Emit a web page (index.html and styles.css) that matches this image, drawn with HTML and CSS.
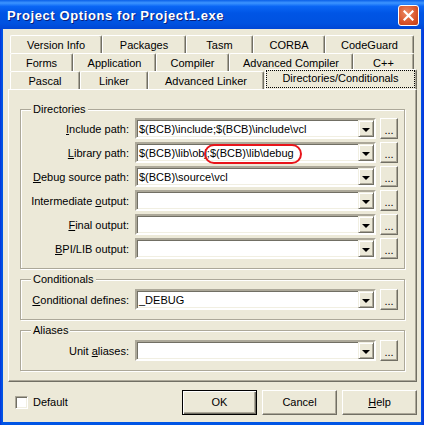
FILE: index.html
```html
<!DOCTYPE html>
<html lang="en">
<head>
    <meta charset="UTF-8">
    <title>Project Options for Project1.exe</title>
    <link rel="stylesheet" href="styles.css">
</head>
<body>
  <div class="window">
    <div class="titlebar">
      <span class="title">Project Options for Project1.exe</span>
      <button class="close" aria-label="Close">
        <svg width="11" height="11" viewBox="0 0 11 11"><path d="M1.5 1.5 L9.5 9.5 M9.5 1.5 L1.5 9.5" stroke="#fff" stroke-width="2.2" stroke-linecap="square"/></svg>
      </button>
    </div>
    <div class="client">
      <div class="tabs">
        <div class="tab-row">
          <div class="tab" style="width:92px">Version Info</div>
          <div class="tab" style="width:84px">Packages</div>
          <div class="tab" style="width:67px">Tasm</div>
          <div class="tab" style="width:72px">CORBA</div>
          <div class="tab" style="width:89px">CodeGuard</div>
        </div>
        <div class="tab-row">
          <div class="tab" style="width:63px">Forms</div>
          <div class="tab" style="width:83px">Application</div>
          <div class="tab" style="width:73px">Compiler</div>
          <div class="tab" style="width:124px">Advanced Compiler</div>
          <div class="tab" style="width:61px">C++</div>
        </div>
        <div class="tab-row">
          <div class="tab" style="width:70px">Pascal</div>
          <div class="tab" style="width:68px">Linker</div>
          <div class="tab" style="width:116px">Advanced Linker</div>
          <div class="tab active"><span class="focus">Directories/Conditionals</span></div>
        </div>
      </div>

      <div class="page">
        <div class="group dirs">
          <span class="group-title">Directories</span>
          <div class="field">
            <label><u>I</u>nclude path:</label>
            <div class="combo"><span class="combo-text">$(BCB)\include;$(BCB)\include\vcl</span><span class="drop"></span></div>
            <button class="dots">...</button>
          </div>
          <div class="field">
            <label><u>L</u>ibrary path:</label>
            <div class="combo"><span class="combo-text">$(BCB)\lib\obj;$(BCB)\lib\debug</span><span class="drop"></span><span class="mark"></span></div>
            <button class="dots">...</button>
          </div>
          <div class="field">
            <label><u>D</u>ebug source path:</label>
            <div class="combo"><span class="combo-text">$(BCB)\source\vcl</span><span class="drop"></span></div>
            <button class="dots">...</button>
          </div>
          <div class="field">
            <label>Intermediate <u>o</u>utput:</label>
            <div class="combo"><span class="combo-text"></span><span class="drop"></span></div>
            <button class="dots">...</button>
          </div>
          <div class="field">
            <label><u>F</u>inal output:</label>
            <div class="combo"><span class="combo-text"></span><span class="drop"></span></div>
            <button class="dots">...</button>
          </div>
          <div class="field">
            <label><u>B</u>PI/LIB output:</label>
            <div class="combo"><span class="combo-text"></span><span class="drop"></span></div>
            <button class="dots">...</button>
          </div>
        </div>

        <div class="group">
          <span class="group-title">Conditionals</span>
          <div class="field">
            <label><u>C</u>onditional defines:</label>
            <div class="combo"><span class="combo-text">_DEBUG</span><span class="drop"></span></div>
            <button class="dots">...</button>
          </div>
        </div>

        <div class="group">
          <span class="group-title">Aliases</span>
          <div class="field">
            <label>Unit <u>a</u>liases:</label>
            <div class="combo"><span class="combo-text"></span><span class="drop"></span></div>
            <button class="dots">...</button>
          </div>
        </div>
      </div>

      <div class="footer">
        <span class="check"></span>
        <span class="check-label">Default</span>
        <button class="btn default">OK</button>
        <button class="btn">Cancel</button>
        <button class="btn"><u>H</u>elp</button>
      </div>
    </div>
  </div>
</body>
</html>
```

FILE: styles.css
```css
* {
  margin: 0;
  padding: 0;
  box-sizing: border-box;
}

body {
  font-family: "Liberation Sans", Arial, sans-serif;
  font-size: 11px;
  color: #000;
  background-color: #0054e3;
}

.window {
  width: 424px;
  height: 425px;
  display: flex;
  flex-direction: column;
  background: linear-gradient(to right, #0831d9, #0055e5 2px, #0055e5 421px, #0831d9);
}

/* title bar */
.titlebar {
  height: 29px;
  display: flex;
  align-items: center;
  justify-content: space-between;
  padding: 2px 5px 0 7px;
  background: linear-gradient(#0a5fe8 0%, #3d95ff 10%, #0a66f5 22%, #0055e5 45%, #0052e0 80%, #0046d5 100%);
}

.title {
  font-family: "Liberation Sans", Arial, sans-serif;
  font-weight: bold;
  font-size: 13px;
  color: #fff;
  text-shadow: 1px 1px #0a1e7a;
  letter-spacing: 0.6px;
}

.close {
  width: 21px;
  height: 21px;
  margin-top: -1px;
  display: flex;
  align-items: center;
  justify-content: center;
  border: 1px solid #fff;
  border-radius: 3px;
  background: radial-gradient(circle at 40% 35%, #ec8a64, #d8542a 60%, #c23b12);
}

/* client area */
.client {
  flex: 1;
  margin: 0 3px 3px;
  background-color: #ece9d8;
  padding: 6px 4px 0 5px;
}

.tabs {
  margin-left: 2px;
  width: 404px;
}

.tab-row {
  display: flex;
  height: 18px;
}

.tab {
  height: 18px;
  text-align: center;
  line-height: 16px;
  padding-top: 1px;
  border-top: 1px solid #fff;
  border-left: 1px solid #fff;
  border-right: 1px solid #716f64;
  box-shadow: inset -1px 0 #aca899;
  border-top-left-radius: 2px;
  border-top-right-radius: 2px;
  background-color: #ece9d8;
  white-space: nowrap;
}

.tab.active {
  flex: 1;
  position: relative;
  z-index: 2;
  height: 20px;
  margin: -2px -3px 0 1px;
  padding: 1px 2px 0 1px;
}

.focus {
  display: block;
  height: 16px;
  line-height: 15px;
  outline: 1px dotted #000;
}

/* tab sheet */
.page {
  position: relative;
  height: 293px;
  width: 409px;
  padding: 19px 11px 0 11px;
  border: 1px solid;
  border-color: #fff #716f64 #716f64 #fff;
  box-shadow: inset -1px -1px #aca899;
}

.group {
  position: relative;
  height: 41px;
  margin-bottom: 10px;
  padding: 9px 0 0 0;
  border: 1px solid #aca899;
  box-shadow: 1px 1px #fff, inset 1px 1px #fff;
}

.group.dirs {
  height: 160px;
  padding-top: 8px;
}

.group-title {
  position: absolute;
  top: -8px;
  left: 10px;
  padding: 0 2px;
  background-color: #ece9d8;
  line-height: 14px;
}

.field {
  display: flex;
  align-items: center;
  height: 21px;
  margin-bottom: 3px;
}

.field label {
  width: 108px;
  margin-right: 6px;
  text-align: right;
  white-space: nowrap;
}

.combo {
  position: relative;
  width: 241px;
  height: 21px;
  display: flex;
  align-items: center;
  background-color: #fff;
  border: 2px solid;
  border-color: #aca899 #fff #fff #aca899;
  box-shadow: inset 1px 1px #716f64, inset -1px -1px #f1efe2;
}

.combo-text {
  flex: 1;
  padding-left: 2px;
  white-space: nowrap;
  overflow: hidden;
}

.drop {
  width: 16px;
  height: 17px;
  display: flex;
  align-items: center;
  justify-content: center;
  background-color: #ece9d8;
  border: 1px solid;
  border-color: #f1efe2 #716f64 #716f64 #f1efe2;
  box-shadow: inset 1px 1px #fff, inset -1px -1px #aca899;
}

.drop::after {
  content: "";
  margin-top: 2px;
  border-left: 4px solid transparent;
  border-right: 4px solid transparent;
  border-top: 4px solid #000;
}

/* red circle drawn on the screenshot */
.mark {
  position: absolute;
  left: 67px;
  top: 0;
  width: 98px;
  height: 20px;
  border: 2px solid #e8141a;
  border-radius: 10px;
}

.dots {
  width: 18px;
  height: 21px;
  margin-left: 4px;
  font-family: "Liberation Sans", Arial, sans-serif;
  font-size: 11px;
  line-height: 22px;
  background-color: #ece9d8;
  border: 1px solid;
  border-color: #fff #716f64 #716f64 #fff;
  box-shadow: inset -1px -1px #aca899;
}

/* bottom bar */
.footer {
  display: flex;
  align-items: center;
  height: 39px;
  padding-top: 1px;
}

.check {
  width: 13px;
  height: 13px;
  margin-left: 7px;
  margin-top: 1px;
  background-color: #fff;
  border: 1px solid;
  border-color: #aca899 #fff #fff #aca899;
  box-shadow: inset 1px 1px #716f64, inset -1px -1px #f1efe2;
}

.check-label {
  margin-left: 5px;
  flex: 1;
}

.btn {
  width: 75px;
  height: 25px;
  margin-left: 5px;
  font-family: "Liberation Sans", Arial, sans-serif;
  font-size: 11px;
  color: #000;
  background-color: #ece9d8;
  border: 1px solid;
  border-color: #fff #716f64 #716f64 #fff;
  box-shadow: inset -1px -1px #aca899;
}

.btn.default {
  border: 1px solid #000;
  box-shadow: inset 1px 1px #fff, inset -1px -1px #716f64, inset -2px -2px #aca899;
}
```
